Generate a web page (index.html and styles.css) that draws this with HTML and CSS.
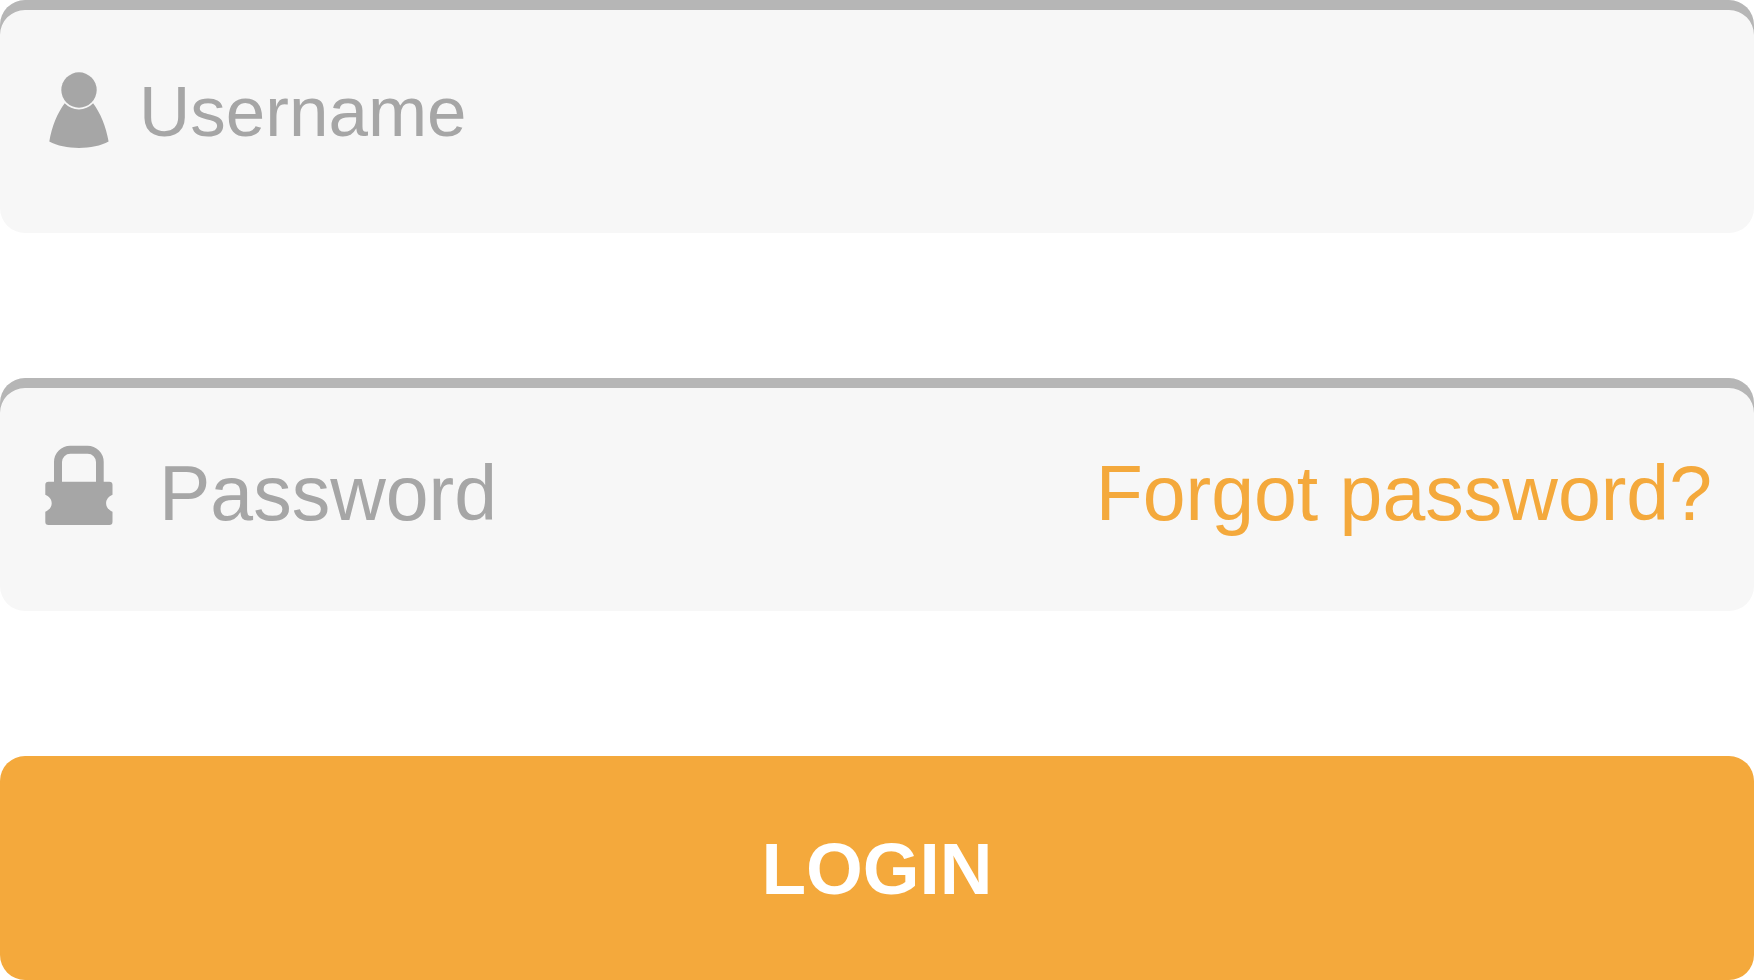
FILE: index.html
```html
<!DOCTYPE html>
<html lang="en">

<head>
  <meta charset="utf-8">
  <meta name="viewport" content="width=device-width, initial-scale=1">
  <title>Login</title>
  <link rel="stylesheet" href="styles.css">
</head>

<body>
  <form class="login-form">
    <div class="field">
      <label for="username" aria-label="Username">
        <svg class="icon" viewBox="0 0 68 82">
          <circle cx="34" cy="23" r="17.7" />
          <path d="M19.7 36.2C12.5 46 6.8 59 4.3 74.6C12 79 23 81 34 81S56 79 63.6 74.6C61 59 55.3 46 48.1 36.2A19.4 19.4 0 0 1 19.7 36.2Z" />
        </svg>
      </label>
      <input type="text" id="username" placeholder="Username">
    </div>

    <div class="field field-password">
      <label for="password" aria-label="Password">
        <svg class="icon" viewBox="0 0 68 82">
          <path d="M9 36.7V17A16.3 16.3 0 0 1 25.3 .7H42.4A16.3 16.3 0 0 1 58.7 17V36.7H64.3A3.2 3.2 0 0 1 67.5 39.9V49.7C63.5 51.5 61.1 54.5 61.1 58.2S63.5 65 67.5 66.7V76.8A3.2 3.2 0 0 1 64.3 80H3.5A3.2 3.2 0 0 1 .3 76.8V66.7C4.3 65 6.7 62 6.7 58.2S4.3 51.5 .3 49.7V39.9A3.2 3.2 0 0 1 3.5 36.7ZM17 36.7H51V17A8.3 8.3 0 0 0 42.7 8.7H25.3A8.3 8.3 0 0 0 17 17Z" fill-rule="evenodd" />
        </svg>
      </label>
      <input type="password" id="password" placeholder="Password">
      <a href="#">Forgot password?</a>
    </div>

    <button type="submit">LOGIN</button>
  </form>
</body>

</html>
```
FILE: styles.css
```css
* {
  margin: 0;
  padding: 0;
  box-sizing: border-box;
  font-family: "Liberation Sans", Arial, sans-serif;
}

:root {
  --main-color: #f4a93c;
  --field-color: #f7f7f7;
  --field-shadow: #b6b6b6;
  --text-color: #a6a6a6;
  --radius: 25px;
}

body {
  background-color: #ffffff;
}

.login-form {
  display: flex;
  flex-direction: column;
  gap: 145px;
}

.field {
  display: flex;
  align-items: flex-start;
  gap: 26px;
  min-height: 233px;
  padding: 61px 42px 61px 45px;
  background-color: var(--field-color);
  border-radius: var(--radius);
  box-shadow: inset 0 10px 0 var(--field-shadow);
  font-size: 71px;
  line-height: 100px;
}

.field-password {
  gap: 46px;
  font-size: 77px;
  line-height: 108px;
}

.icon {
  display: block;
  width: 68px;
  height: 82px;
  margin-top: 6px;
  fill: var(--text-color);
}

.field input {
  flex: 1;
  min-width: 0;
  height: 108px;
  border: none;
  outline: none;
  background: transparent;
  color: var(--text-color);
  font-size: inherit;
}

#username {
  height: 100px;
}

.field input::placeholder {
  color: var(--text-color);
  opacity: 1;
}

.field a {
  color: var(--main-color);
  text-decoration: none;
  white-space: nowrap;
}

button {
  padding: 63px 40px 61px;
  border: none;
  border-radius: var(--radius);
  background-color: var(--main-color);
  color: #ffffff;
  font-size: 73px;
  font-weight: bold;
  line-height: 100px;
  cursor: pointer;
}
```
